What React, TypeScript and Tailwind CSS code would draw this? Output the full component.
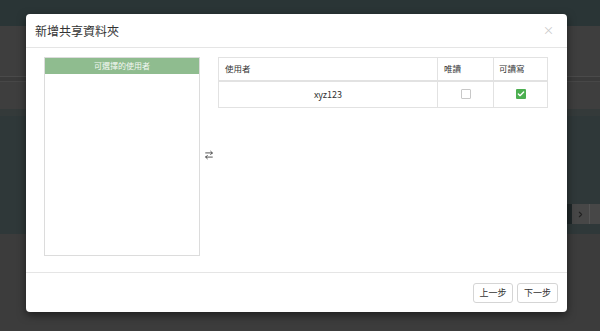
import React from 'react';
import { ArrowRightLeft, Check, ChevronRight } from 'lucide-react';

const font = { fontFamily: '"Noto Sans CJK TC", "Noto Sans", sans-serif' };

export default function App() {
    return (
        <div className="relative h-[331px] w-[600px] overflow-hidden bg-[#3c3c3c]" style={font}>
            {/* Page behind the backdrop */}
            <div className="flex h-full flex-col">
                <div className="h-[26px] bg-[#2a3536]" />
                <div className="h-[51px] border-b border-[#4a4a4a] bg-[#3e3e3e]" />
                <div className="h-[5px] border-b border-[#474747] bg-[#3a3a3a]" />
                <div className="h-[27px] bg-[#3e3e3e]" />
                <div className="h-[7px] bg-[#343a3a]" />
                <div className="flex h-[118px] flex-col justify-end bg-[#2f3839] pb-[10px]">
                    <div className="flex h-[20px] justify-end">
                        <div className="w-[5px] bg-[#1f2728]" />
                        <div className="flex w-[18px] items-center justify-center border-r border-[#555] bg-[#474747] text-[#222]">
                            <ChevronRight size={9} strokeWidth={3} />
                        </div>
                        <div className="w-[10px] bg-[#474747]" />
                    </div>
                </div>
                <div className="flex-1 bg-[#3c3c3c]" />
            </div>

            {/* Modal */}
            <div className="absolute top-[14px] left-[26px] flex h-[298px] w-[541px] flex-col rounded-[4px] bg-white shadow-[0_3px_9px_rgba(0,0,0,0.5)]">
                <div className="flex h-[34px] items-center justify-between border-b border-[#e5e5e5] px-[9px]">
                    <span className="text-[12px] text-[#333]">新增共享資料夾</span>
                    <span className="mr-[4px] text-[11px] text-[#c8c8c8]">×</span>
                </div>

                <div className="flex flex-1 items-stretch pt-[9px] pr-[19px] pb-[16px] pl-[18px]">
                    <div className="flex w-[156px] flex-col border border-[#dcdcdc]">
                        <div className="flex h-[16px] items-center justify-center bg-[#8fbc8f] text-[8px] text-[#f3f8f3]">可選擇的使用者</div>
                    </div>
                    <div className="flex w-[18px] items-center justify-center pb-[3px] text-[#333]">
                        <ArrowRightLeft size={10} strokeWidth={2} />
                    </div>
                    <div className="flex-1">
                        <table className="w-full border-collapse text-[8.5px] text-[#333]">
                            <thead>
                                <tr className="h-[23px]">
                                    <th className="border border-b-2 border-[#e2e2e2] pl-[6px] text-left font-normal">使用者</th>
                                    <th className="w-[56px] border border-b-2 border-[#e2e2e2] pl-[6px] text-left font-normal">唯讀</th>
                                    <th className="w-[54px] border border-b-2 border-[#e2e2e2] pl-[5px] text-left font-normal">可讀寫</th>
                                </tr>
                            </thead>
                            <tbody>
                                <tr className="h-[27px]">
                                    <td className="border border-[#e2e2e2] text-center text-[9px]">xyz123</td>
                                    <td className="border border-[#e2e2e2]">
                                        <div className="mx-auto h-[10px] w-[10px] rounded-[1px] border border-[#c8c8c8] bg-white" />
                                    </td>
                                    <td className="border border-[#e2e2e2]">
                                        <div className="mx-auto flex h-[10px] w-[10px] items-center justify-center rounded-[1px] bg-[#4caf50] text-white">
                                            <Check size={8} strokeWidth={4} />
                                        </div>
                                    </td>
                                </tr>
                            </tbody>
                        </table>
                    </div>
                </div>

                <div className="flex h-[40px] items-center justify-end gap-[4px] border-t border-[#e5e5e5] pr-[9px]">
                    <button className="h-[20px] w-[40px] rounded-[3px] border border-[#d5d5d5] bg-white text-[9px] text-[#333]">上一步</button>
                    <button className="h-[20px] w-[41px] rounded-[3px] border border-[#d5d5d5] bg-white text-[9px] text-[#333]">下一步</button>
                </div>
            </div>
        </div>
    );
}
